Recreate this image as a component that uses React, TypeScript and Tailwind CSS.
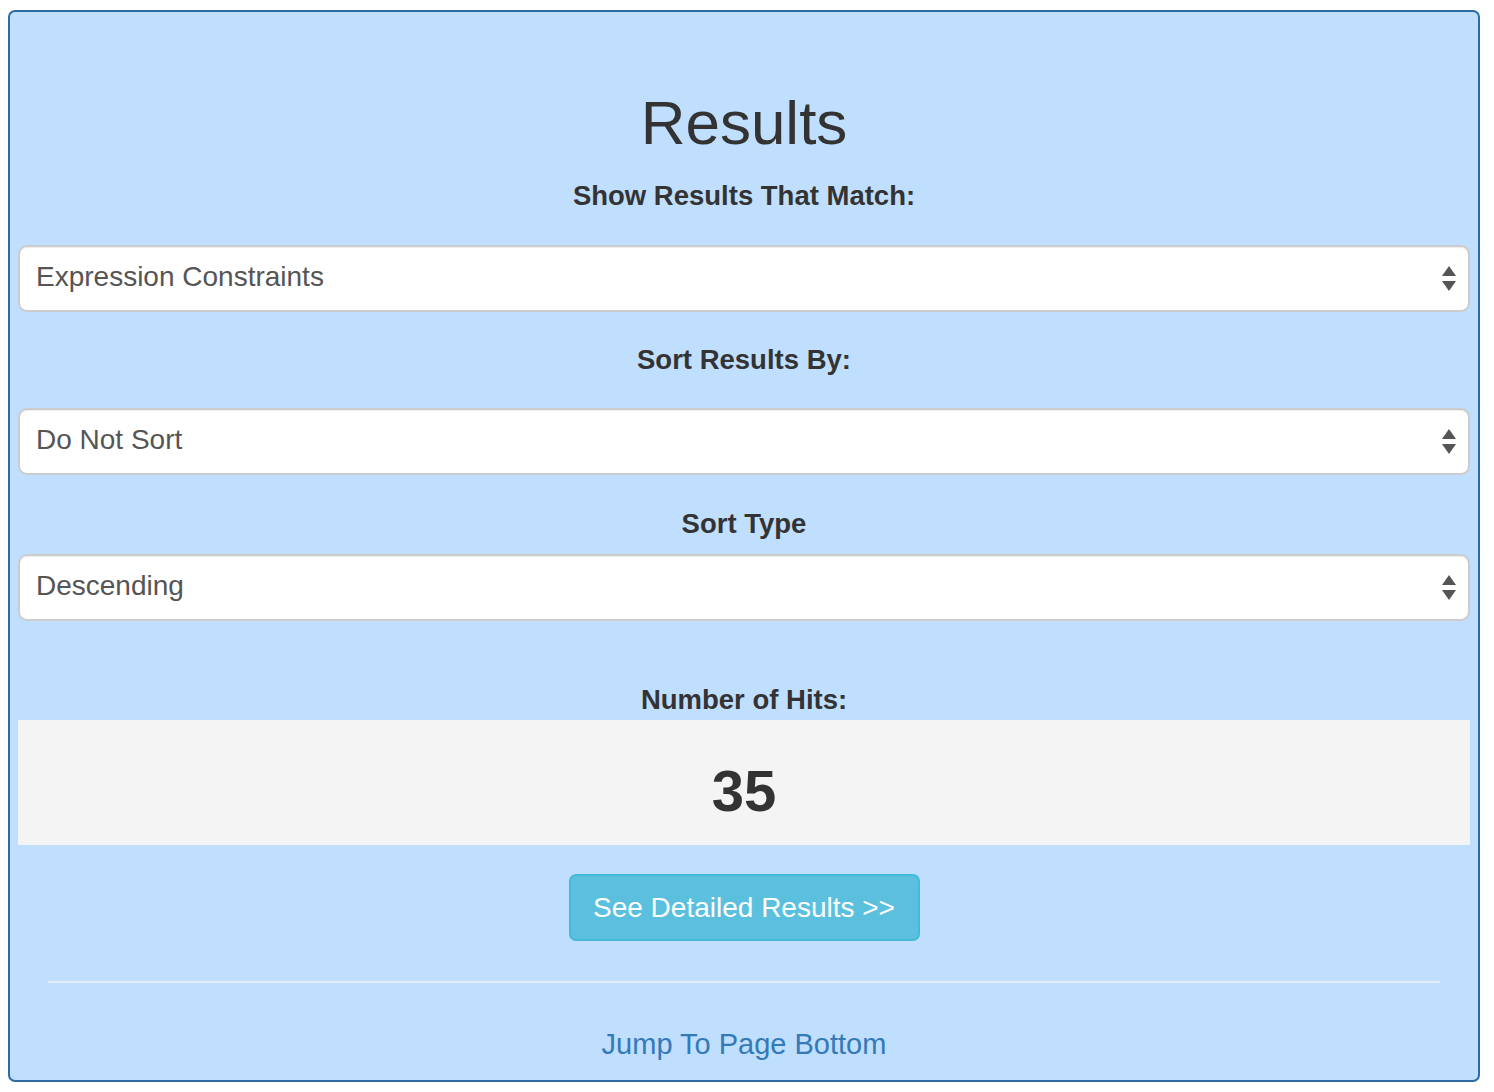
import React from "react";

const font = { fontFamily: '"Liberation Sans", Arial, sans-serif' };

function SelectBox({ value }: { value: string }) {
  return (
    <div className="relative flex h-[67px] w-full items-center rounded-[9px] border-2 border-[#cccccc] bg-white pb-[3px] pl-[16px] text-[28px] text-[#555555] shadow-[inset_0_1px_1px_rgba(0,0,0,0.075)]">
      <span>{value}</span>
      <svg
        className="absolute right-[12px] top-1/2 -translate-y-1/2"
        width="14"
        height="26"
        viewBox="0 0 14 26"
      >
        <polygon points="7,0 14,10 0,10" fill="#555555" />
        <polygon points="0,15 14,15 7,25" fill="#555555" />
      </svg>
    </div>
  );
}

function Label({ children, className }: { children: React.ReactNode; className: string }) {
  return (
    <div className={`h-[32px] text-center text-[27.5px] font-bold leading-[32px] text-[#333333] ${className}`}>
      {children}
    </div>
  );
}

export default function App() {
  return (
    <div className="min-h-screen bg-white pl-[8px] pt-[10px]" style={font}>
      <div className="flex h-[1072px] w-[1472px] flex-col rounded-[7px] border-2 border-[#2d6ca2] bg-[#c0defe] px-[8px]">
        <h1 className="mt-[75px] h-[72px] text-center text-[62px] font-medium leading-[72px] text-[#333333]">
          Results
        </h1>

        <Label className="mt-[21px]">Show Results That Match:</Label>
        <div className="mt-[33px]">
          <SelectBox value="Expression Constraints" />
        </div>

        <Label className="mt-[32px]">Sort Results By:</Label>
        <div className="mt-[32px]">
          <SelectBox value="Do Not Sort" />
        </div>

        <Label className="mt-[33px]">Sort Type</Label>
        <div className="mt-[14px]">
          <SelectBox value="Descending" />
        </div>

        <Label className="mt-[63px]">Number of Hits:</Label>
        <div className="mt-[4px] flex h-[125px] items-center justify-center bg-[#f4f4f4] pt-[16px] text-[58px] font-bold text-[#333333]">
          35
        </div>

        <div className="mt-[29px] flex justify-center">
          <button className="h-[67px] w-[351px] rounded-[7px] border-2 border-[#46b8da] bg-[#5bc0de] text-[28px] text-white">
            See Detailed Results &gt;&gt;
          </button>
        </div>

        <div className="mx-[30px] mt-[40px] h-[2px] bg-[#e4eefa]" />

        <div className="mt-[45px] h-[32px] text-center text-[29px] leading-[32px] text-[#337ab7]">
          <a href="#bottom">Jump To Page Bottom</a>
        </div>
      </div>
    </div>
  );
}
